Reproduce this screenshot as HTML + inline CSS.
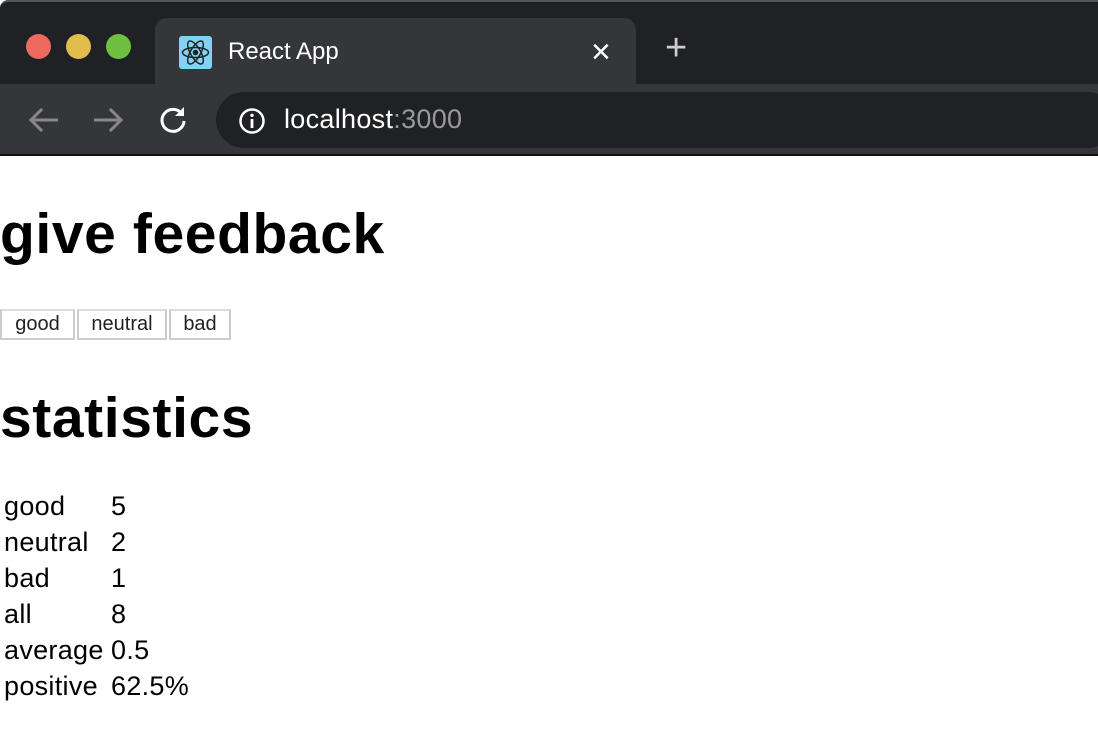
<!DOCTYPE html>
<html><head><style>
*{margin:0;padding:0;box-sizing:border-box}
body{width:1098px;height:734px;overflow:hidden;background:#fff;font-family:"Liberation Sans",sans-serif;position:relative}
.top{position:absolute;left:0;top:0;width:1098px;height:84px;background:#202124;border-top:2px solid #555;border-radius:8px 0 0 0}
.dot{position:absolute;top:32px;width:25px;height:25px;border-radius:50%}
.tab{position:absolute;left:155px;top:16px;width:481px;height:70px;background:#35363a;border-radius:12px 12px 0 0}
.bar{position:absolute;left:0;top:84px;width:1098px;height:72px;background:#35363a;border-bottom:2px solid #111}
.omni{position:absolute;left:216px;top:8px;width:900px;height:56px;background:#202124;border-radius:28px}
h1{position:absolute;left:0;font-size:57px;font-weight:bold;color:#000;letter-spacing:0.6px}
.btns{position:absolute;left:0;top:309px;display:flex}
.btns span{display:block;height:31px;border:2px solid #ccc;border-top-color:#ddd;font-size:20px;line-height:27px;color:#222;text-align:center;margin-right:2px;background:#fff}
table{position:absolute;left:2px;top:488px;border-collapse:separate;border-spacing:2px 0;font-size:27px;color:#000;letter-spacing:0.3px}
td{height:36px;padding:0}
td:first-child{width:105px}
</style></head><body>
<div class="top">
<div class="dot" style="left:26px;background:#ee6a5e"></div>
<div class="dot" style="left:66px;background:#e3bd4b"></div>
<div class="dot" style="left:106px;background:#6fbf40"></div>
<div class="tab">
<div style="position:absolute;left:24px;top:18px;width:33px;height:33px;background:#7fd3f5;border-radius:3px">
<svg width="33" height="33" viewBox="0 0 33 33" fill="none" stroke="#222" stroke-width="1.5"><ellipse cx="16.5" cy="16.5" rx="13" ry="5"/><ellipse cx="16.5" cy="16.5" rx="13" ry="5" transform="rotate(60 16.5 16.5)"/><ellipse cx="16.5" cy="16.5" rx="13" ry="5" transform="rotate(-60 16.5 16.5)"/><circle cx="16.5" cy="16.5" r="2" fill="#222"/></svg></div>
<div style="position:absolute;left:73px;top:20px;color:#fff;font-size:24px">React App</div>
<div style="position:absolute;left:436px;top:14px;color:#fff;font-size:34px;line-height:40px">×</div>
</div>
<div style="position:absolute;left:665px;top:26px;color:#ccc;font-size:38px;line-height:40px">+</div>
</div>
<div class="bar">
<svg style="position:absolute;left:28px;top:22px" width="32" height="28" viewBox="0 0 32 28" fill="none" stroke="#888" stroke-width="3"><path d="M30 14H4M14 3L3 14l11 11"/></svg>
<svg style="position:absolute;left:92px;top:22px" width="32" height="28" viewBox="0 0 32 28" fill="none" stroke="#888" stroke-width="3"><path d="M2 14h26M18 3l11 11-11 11"/></svg>
<svg style="position:absolute;left:158px;top:20px" width="30" height="30" viewBox="0 0 30 30" fill="none" stroke="#fff" stroke-width="3"><path d="M24 10A11 11 0 1 0 26 17"/><path d="M26 3v9h-9z" fill="#fff" stroke="none"/></svg>
<div class="omni">
<svg style="position:absolute;left:22px;top:15px" width="28" height="28" viewBox="0 0 28 28"><circle cx="14" cy="14" r="11.5" fill="none" stroke="#fff" stroke-width="2.5"/><rect x="12.6" y="12" width="2.8" height="9" fill="#fff"/><circle cx="14" cy="8.3" r="1.7" fill="#fff"/></svg>
<div style="position:absolute;left:68px;top:12px;font-size:27px;color:#fff;letter-spacing:0.3px">localhost<span style="color:#999">:3000</span></div>
</div>
</div>
<h1 style="top:201px">give feedback</h1>
<div class="btns"><span style="width:75px">good</span><span style="width:90px">neutral</span><span style="width:62px">bad</span></div>
<h1 style="top:385px">statistics</h1>
<table>
<tr><td>good</td><td>5</td></tr>
<tr><td>neutral</td><td>2</td></tr>
<tr><td>bad</td><td>1</td></tr>
<tr><td>all</td><td>8</td></tr>
<tr><td>average</td><td>0.5</td></tr>
<tr><td>positive</td><td>62.5%</td></tr>
</table>
</body></html>
